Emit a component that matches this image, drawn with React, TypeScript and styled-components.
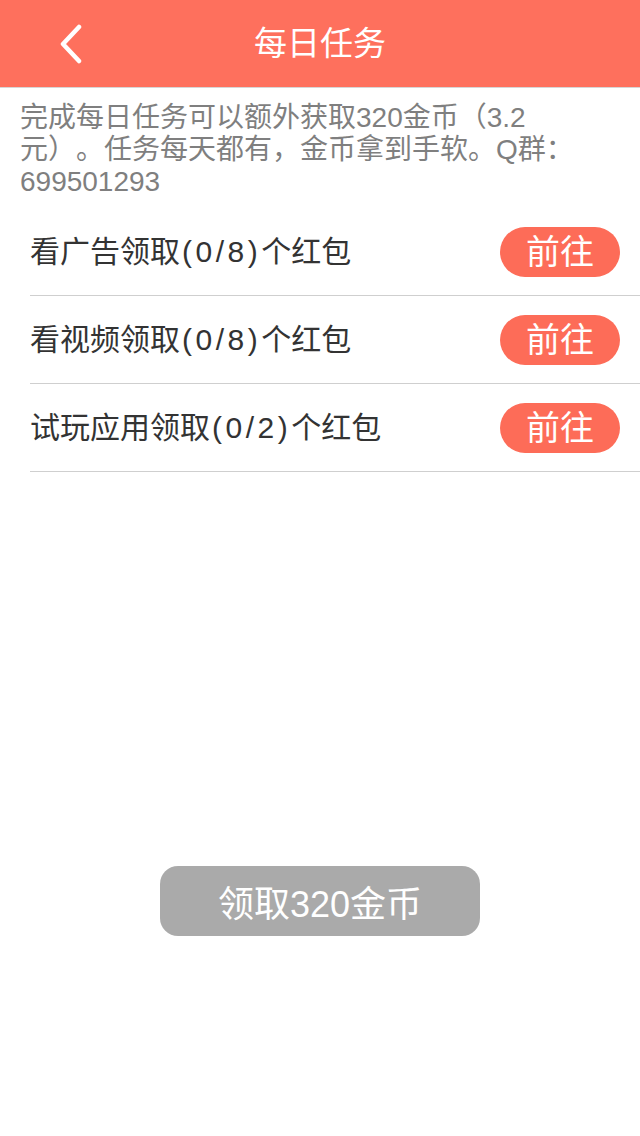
import React from 'react'
import styled, { createGlobalStyle } from 'styled-components'

const GlobalStyle = createGlobalStyle`
  html, body {
    margin: 0;
    padding: 0;
    background: #ffffff;
  }
  body {
    font-family: "Liberation Sans", "Noto Sans CJK SC", sans-serif;
    text-spacing-trim: space-all;
  }
`

type Task = {
  name: string
  done: number
  total: number
}

const tasks: Task[] = [
  { name: '看广告领取', done: 0, total: 8 },
  { name: '看视频领取', done: 0, total: 8 },
  { name: '试玩应用领取', done: 0, total: 2 },
]

const Page = styled.div`
  width: 640px;
  height: 1136px;
  display: flex;
  flex-direction: column;
  background: #fff;
  overflow: hidden;
`

const Header = styled.header`
  height: 88px;
  flex-shrink: 0;
  display: grid;
  grid-template-columns: 120px 1fr 120px;
  align-items: center;
  background: #fe705d;
  border-bottom: 1px solid #d6d6d6;
  box-sizing: border-box;
`

const BackButton = styled.div`
  display: flex;
  align-items: center;
  padding-left: 58px;
  height: 100%;
`

const Title = styled.h1`
  margin: 0;
  text-align: center;
  color: #fff;
  font-size: 33px;
  font-weight: 400;
  line-height: 88px;
`

const Notice = styled.p`
  margin: 0;
  padding: 14px 20px 10px;
  color: #7f7f7f;
  font-size: 28px;
  line-height: 32px;
`

const List = styled.ul`
  list-style: none;
  margin: 0;
  padding: 0 0 0 30px;
  flex: 1;
`

const Row = styled.li`
  height: 88px;
  display: flex;
  align-items: center;
  justify-content: space-between;
  padding-right: 20px;
  border-bottom: 1px solid #cfcfcf;
  box-sizing: border-box;
`

const RowTitle = styled.span`
  color: #333;
  font-size: 30px;
  padding-bottom: 6px;
`

const Count = styled.span`
  letter-spacing: 3.5px;
  margin-left: 2px;
`

const GoButton = styled.button`
  width: 120px;
  height: 50px;
  border: none;
  border-radius: 25px;
  background: #fd6c58;
  color: #fff;
  font-family: inherit;
  font-size: 34px;
  line-height: 50px;
  padding: 0;
`

const Footer = styled.footer`
  height: 290px;
  flex-shrink: 0;
  display: flex;
  justify-content: center;
  padding-top: 20px;
  box-sizing: border-box;
`

const ClaimButton = styled.button`
  width: 320px;
  height: 70px;
  border: none;
  border-radius: 18px;
  background: #aaaaaa;
  color: #fff;
  font-family: inherit;
  font-size: 36px;
  padding: 0;
`

export default function App() {
  return (
    <>
      <GlobalStyle />
      <Page>
        <Header>
          <BackButton>
            <svg width="26" height="40" viewBox="0 0 26 40">
              <path d="M21 3 L5 20 L21 37" fill="none" stroke="#fff" strokeWidth="4.5" strokeLinecap="round" strokeLinejoin="round" />
            </svg>
          </BackButton>
          <Title>每日任务</Title>
          <div />
        </Header>
        <Notice>
          完成每日任务可以额外获取320金币（3.2
          <br />
          元）。任务每天都有，金币拿到手软。Q群：
          <br />
          699501293
        </Notice>
        <List>
          {tasks.map((t) => (
            <Row key={t.name}>
              <RowTitle>
                {t.name}
                <Count>({t.done}/{t.total})</Count>
                个红包
              </RowTitle>
              <GoButton>前往</GoButton>
            </Row>
          ))}
        </List>
        <Footer>
          <ClaimButton>领取320金币</ClaimButton>
        </Footer>
      </Page>
    </>
  )
}
